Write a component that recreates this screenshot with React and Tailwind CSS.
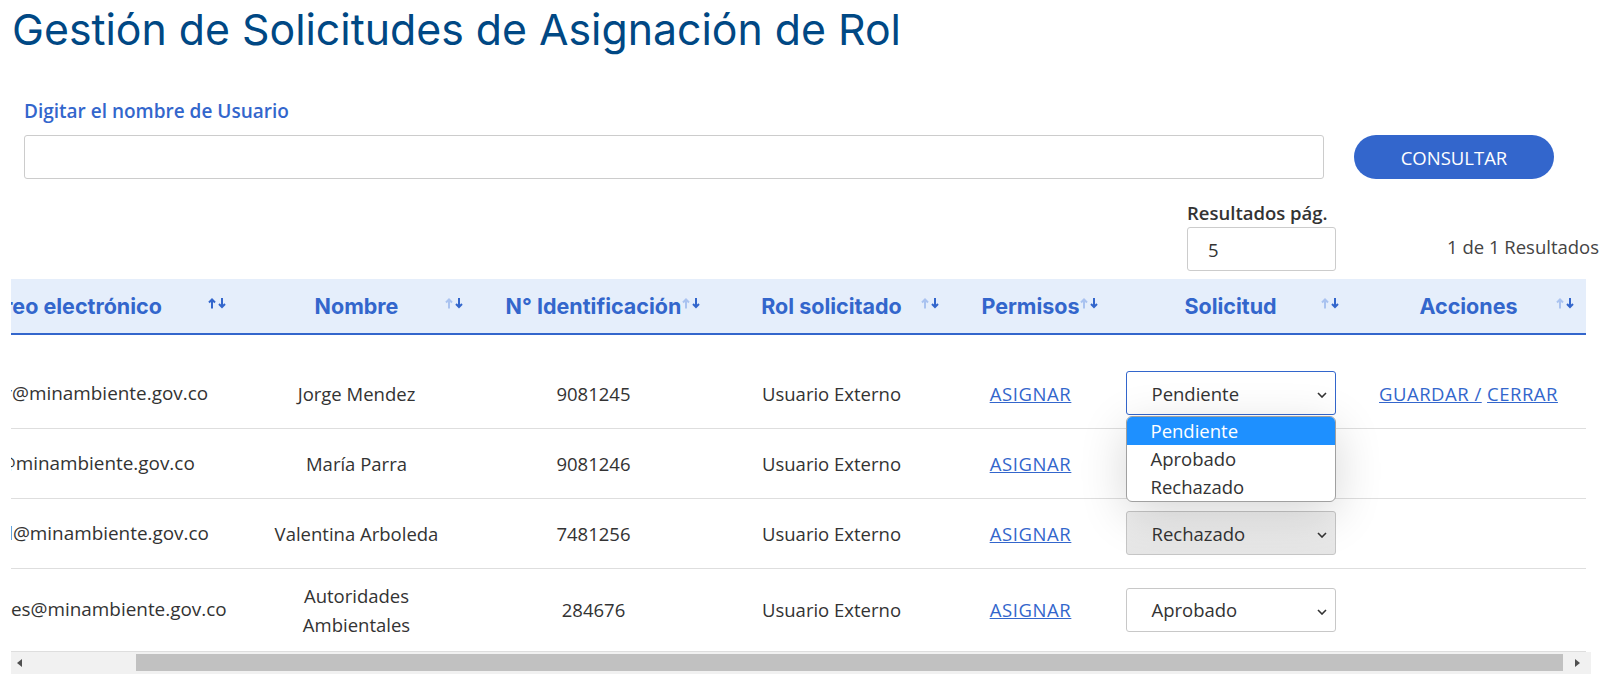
import React, { useEffect, useRef } from 'react';

const columns = [
  { label: 'Correo electrónico', w: 'w-[348px]', active: true },
  { label: 'Nombre', w: 'w-[237px]' },
  { label: 'N° Identificación', w: 'w-[237px]' },
  { label: 'Rol solicitado', w: 'w-[239px]' },
  { label: 'Permisos', w: 'w-[159px]' },
  { label: 'Solicitud', w: 'w-[241px]' },
  { label: 'Acciones', w: 'w-[235px]' },
];

const rows = [
  { email: 'jorgemenr@minambiente.gov.co', name: 'Jorge Mendez', id: '9081245', state: 'Pendiente', open: true, actions: true },
  { email: 'mparra@minambiente.gov.co', name: 'María Parra', id: '9081246', state: 'Pendiente' },
  { email: 'vparboledl@minambiente.gov.co', name: 'Valentina Arboleda', id: '7481256', state: 'Rechazado', disabled: true },
  { email: 'rnotificaciones@minambiente.gov.co', name: 'Autoridades Ambientales', id: '284676', state: 'Aprobado' },
];

const SortIcon = ({ active }) => (
  <svg width="19" height="11" viewBox="0 0 19 11" className="absolute right-[11px] top-[19px]">
    <path d="M4 10.5V1.5M1 4.5l3-3 3 3" fill="none" stroke={active ? '#3366cc' : '#aac3f0'} strokeWidth="2" />
    <path d="M14 0v9M11 6l3 3 3-3" fill="none" stroke="#3366cc" strokeWidth="2" />
  </svg>
);

const Chevron = () => (
  <svg width="10" height="6" viewBox="0 0 10 6" className="absolute right-[8px] top-[20px]">
    <path d="M1 1l4 4 4-4" fill="none" stroke="#333" strokeWidth="1.6" />
  </svg>
);

const FakeSelect = ({ value, open, disabled }) => (
  <div className="relative w-[210px] mx-auto">
    <div
      className={
        'relative h-[44px] rounded-[3px] flex items-center pl-[25px] text-left ' +
        (open
          ? 'border border-[#3366cc] bg-white'
          : disabled
          ? 'border border-[#c6c6c6] bg-gradient-to-b from-[#efefef] to-[#e6e6e6]'
          : 'border border-[#c8c8c8] bg-white')
      }
    >
      {value}
      <Chevron />
    </div>
    {open && (
      <div className="absolute left-0 top-full mt-[1px] w-[210px] z-20 bg-white rounded-[6px] border border-[#a0a0a0] shadow-[0_12px_48px_rgba(0,0,0,0.16)] overflow-hidden text-left leading-[28px]">
        <div className="pl-[24px] bg-[#1e90ff] text-white">Pendiente</div>
        <div className="pl-[24px]">Aprobado</div>
        <div className="pl-[24px]">Rechazado</div>
      </div>
    )}
  </div>
);

export default function App() {
  const scrollRef = useRef(null);

  useEffect(() => {
    if (scrollRef.current) scrollRef.current.scrollLeft = 121;
  }, []);

  return (
    <div className="w-[1602px] h-[676px] overflow-hidden bg-white font-['Open_Sans',sans-serif] text-[18.5px] leading-[29px] text-[#333]">
      <h1 className="h-[58px] flex items-center pl-[12px] font-['Inter',sans-serif] text-[42.8px] font-normal text-[#004884]">
        Gestión de Solicitudes de Asignación de Rol
      </h1>

      {/* Busqueda */}
      <div className="pl-[24px] pt-[39px]">
        <label className="block font-semibold text-[19px] text-[#3366cc] mb-[9px]">Digitar el nombre de Usuario</label>
        <div className="flex items-center gap-[30px]">
          <input className="w-[1300px] h-[44px] border border-[#cccccc] rounded-[3px] px-3 outline-none" />
          <button className="w-[200px] h-[44px] rounded-full bg-[#3366cc] text-white">CONSULTAR</button>
        </div>
      </div>

      {/* Paginacion */}
      <div className="flex items-center pl-[1187px] pt-[19px]">
        <div className="w-[149px]">
          <div className="font-semibold whitespace-nowrap">Resultados pág.</div>
          <div className="h-[44px] border border-[#cccccc] rounded-[3px] flex items-center pl-[20px]">5</div>
        </div>
        <div className="ml-[111px] pt-[23px] whitespace-nowrap text-[#444]">1 de 1 Resultados</div>
      </div>

      {/* Tabla */}
      <div ref={scrollRef} className="mx-[11px] mt-[8px] overflow-hidden">
        <div className="w-[1706px]">
          <table className="table-fixed w-[1696px] border-collapse">
            <thead>
              <tr className="bg-[#e5eefb]">
                {columns.map((c) => (
                  <th
                    key={c.label}
                    className={`${c.w} relative h-[55px] border-b-2 border-[#3366cc] text-center font-['Inter',sans-serif] text-[21.5px] font-bold text-[#3366cc] whitespace-nowrap`}
                  >
                    {c.label}
                    <SortIcon active={c.active} />
                  </th>
                ))}
              </tr>
            </thead>
            <tbody>
              {rows.map((r, i) => {
                const cell = i === 0 ? 'h-[94px] pt-[24px]' : 'h-[70px]';
                const nameCell = i === 0 ? 'h-[94px] pt-[24px]' : 'h-[70px] py-[12px]';
                return (
                  <tr key={r.id} className="border-b border-[#dedede]">
                    <td className={`${cell} px-[8px] text-center text-[18.9px] whitespace-nowrap`}>{r.email}</td>
                    <td className={`${nameCell} px-[24px] text-center`}>{r.name}</td>
                    <td className={`${cell} text-center`}>{r.id}</td>
                    <td className={`${cell} text-center`}>Usuario Externo</td>
                    <td className={`${cell} text-center`}>
                      <a href="#" className="text-[#3366cc] underline tracking-[0.6px]">ASIGNAR</a>
                    </td>
                    <td className={`${cell} px-[15px] text-center`}>
                      <FakeSelect value={r.state} open={r.open} disabled={r.disabled} />
                    </td>
                    <td className={`${cell} text-center text-[#3366cc] tracking-[0.5px]`}>
                      {r.actions && (
                        <span>
                          <a href="#" className="underline">GUARDAR /</a> <a href="#" className="underline">CERRAR</a>
                        </span>
                      )}
                    </td>
                  </tr>
                );
              })}
            </tbody>
          </table>
        </div>
      </div>

      {/* Barra de desplazamiento */}
      <div className="mx-[11px] h-[22px] bg-[#f1f1f1] flex items-center">
        <div className="w-[17px] flex justify-center">
          <svg width="5" height="8" viewBox="0 0 5 8"><path d="M5 0v8L0 4z" fill="#505050" /></svg>
        </div>
        <div className="ml-[108px] w-[1427px] h-[17px] bg-[#c1c1c1]" />
        <div className="flex-1 flex justify-center">
          <svg width="5" height="8" viewBox="0 0 5 8"><path d="M0 0v8l5-4z" fill="#505050" /></svg>
        </div>
      </div>
    </div>
  );
}
